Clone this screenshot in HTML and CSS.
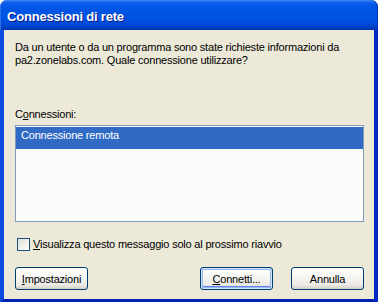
FILE: index.html
```html
<!DOCTYPE html>
<html lang="it">
<head>
<meta charset="utf-8">
<title>Connessioni di rete</title>
<link rel="stylesheet" href="styles.css">
</head>
<body>
<div class="window">
  <div class="titlebar"><span class="title">Connessioni di rete</span></div>
  <div class="client">
    <p class="msg">Da un utente o da un programma sono state richieste informazioni da<br>pa2.zonelabs.com. Quale connessione utilizzare?</p>
    <div class="label">C<u>o</u>nnessioni:</div>
    <div class="listbox">
      <div class="item selected">Connessione remota</div>
    </div>
    <div class="checkrow">
      <span class="checkbox"></span>
      <span class="checklabel"><u>V</u>isualizza questo messaggio solo al prossimo riavvio</span>
    </div>
    <div class="buttons">
      <button class="btn"><u>I</u>mpostazioni</button>
      <div class="right">
        <button class="btn default"><u>C</u>onnetti...</button>
        <button class="btn">Annulla</button>
      </div>
    </div>
  </div>
</div>
</body>
</html>
```
FILE: styles.css
```css
html, body {
  margin: 0;
  padding: 0;
  background: #ffffff;
}
.window {
  width: 378px;
  height: 302px;
  display: flex;
  flex-direction: column;
  font-family: "Liberation Sans", Arial, sans-serif;
  font-size: 11px;
  color: #000;
}
.titlebar {
  height: 27px;
  padding-top: 3px;
  padding-left: 7px;
  border-radius: 7px 7px 0 0;
  background: linear-gradient(to bottom, #3d8cf6 0px, #1565ee 2px, #0458e8 5px, #0054e3 12px, #0052e0 20px, #0047d2 25px, #003cbf 28px, #0030a8 30px);
  box-shadow: inset 1px 0 0 #2b70ee, inset -1px 0 0 #0035b8;
}
.title {
  display: block;
  font-weight: bold;
  font-size: 13px;
  line-height: 27px;
  letter-spacing: -0.2px;
  color: #fff;
  text-shadow: 1px 1px 0 #0a1883;
}
.client {
  flex: 1;
  display: flex;
  flex-direction: column;
  background: #ece9d8;
  border-left: 4px solid #0a4ce0;
  border-right: 4px solid #0027c4;
  border-bottom: 4px solid #0020b0;
  padding: 11px 10px 9px 11px;
}
.msg {
  margin: 0;
  line-height: 13px;
  letter-spacing: -0.2px;
}
.label {
  margin-top: 41px;
  line-height: 13px;
  letter-spacing: -0.2px;
}
.listbox {
  margin-top: 4px;
  height: 94px;
  border: 1px solid #7f9db9;
  background: #fbfcfb;
  padding-top: 1px;
}
.item {
  height: 22px;
  line-height: 13px;
  padding: 2px 5px 0 5px;
  box-sizing: border-box;
  letter-spacing: -0.2px;
}
.item.selected {
  background: #316ac5;
  color: #fff;
}
.checkrow {
  margin-top: 16px;
  display: flex;
  align-items: center;
  height: 13px;
  padding-left: 2px;
}
.checkbox {
  width: 11px;
  height: 11px;
  border: 1px solid #1c5180;
  background: linear-gradient(135deg, #dcdcd7 0%, #f2f2ee 60%, #ffffff 100%);
}
.checklabel {
  margin-left: 3px;
  line-height: 13px;
  letter-spacing: -0.2px;
}
.buttons {
  margin-top: 16px;
  display: flex;
  justify-content: space-between;
}
.right {
  display: flex;
  gap: 18px;
}
.btn {
  width: 73px;
  height: 23px;
  padding: 0;
  font-family: "Liberation Sans", Arial, sans-serif;
  font-size: 11px;
  letter-spacing: -0.2px;
  color: #000;
  border: 1px solid #003c74;
  border-radius: 3px;
  background: linear-gradient(to bottom, #ffffff 0%, #f6f6f2 40%, #ecebe6 80%, #d6d0c5 100%);
  box-shadow: inset 0 -1px 0 #d6d0c5;
}
.btn.default {
  box-shadow: inset 0 0 0 1px #cee7ff, inset 0 0 0 2px #98b8ea, inset 0 -2px 0 1px #6982ee;
}
u {
  text-decoration: underline;
}
```
